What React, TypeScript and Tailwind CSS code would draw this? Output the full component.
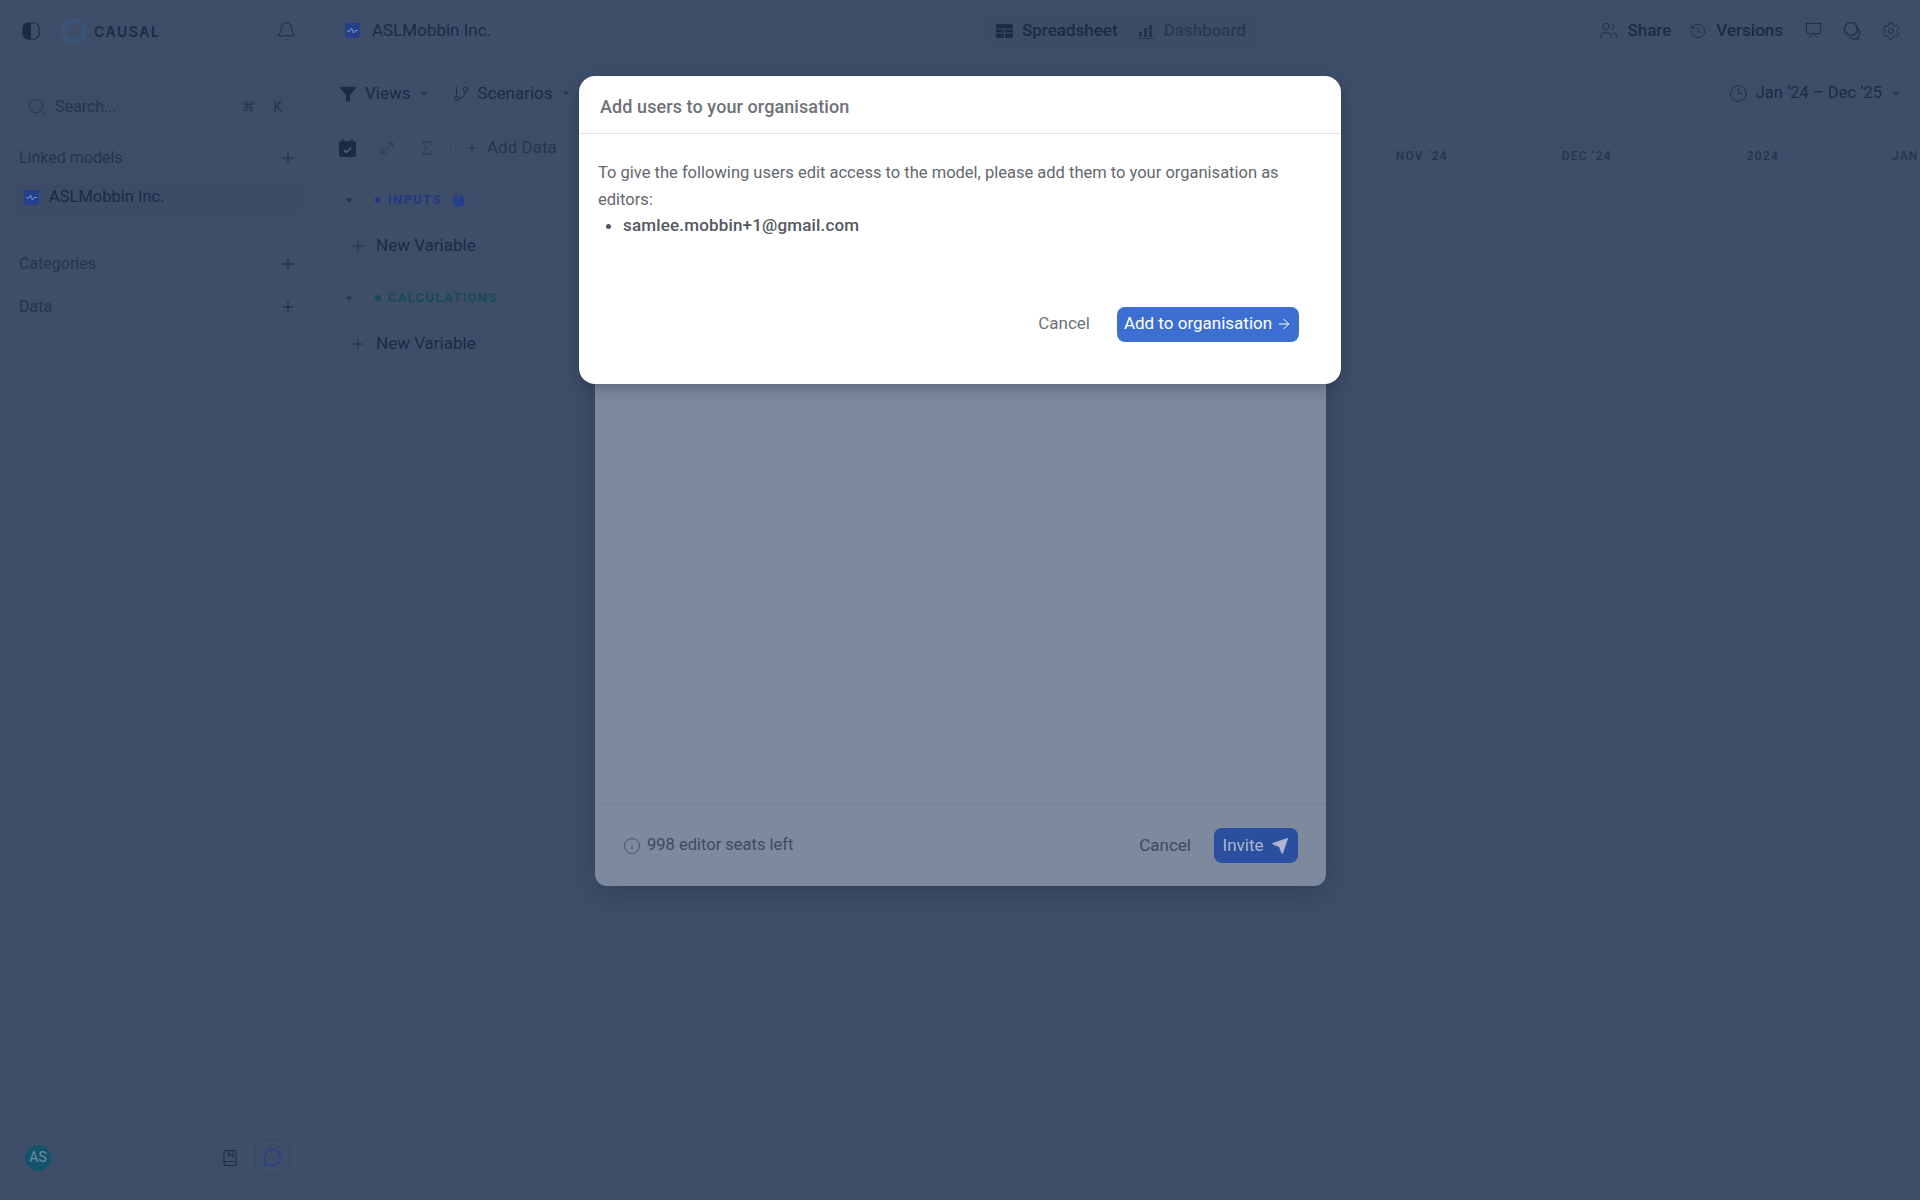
import {
  ArrowRight,
  Bell,
  BookMarked,
  Clock3,
  Filter,
  GitBranch,
  History,
  Info,
  MessageCircleMore,
  MoveDiagonal,
  Plus,
  Presentation,
  Search,
  Send,
  Settings,
  Sigma,
  Users,
} from 'lucide-react';

const Caret = ({ className = 'text-[#1d2a45]/60' }: { className?: string }) => (
  <svg width="8" height="5" viewBox="0 0 8 5" className={className}>
    <path d="M0.5 0.5h7L4 4.5z" fill="currentColor" />
  </svg>
);

const ModelIcon = () => (
  <svg width="15" height="15" viewBox="0 0 15 15">
    <rect width="15" height="15" rx="2" fill="#24408c" />
    <path d="M2 8h3l1.5-3 2 5 1.5-2.500h3" fill="none" stroke="#7d95c8" strokeWidth="1" />
  </svg>
);

const Section = ({ label, top }: { label: string; top: string }) => (
  <div className={`flex h-[22px] items-center justify-between pr-[21px] pl-[19px] text-[16px] text-[#27344e] ${top}`}>
    {label}
    <Plus size={18} strokeWidth={1.25} className="text-[#1d2a45]" />
  </div>
);

const Sidebar = () => (
  <aside className="flex h-full w-[319px] shrink-0 flex-col border-r border-[#3b4b66]">
    <div className="flex h-[62px] items-center pr-[21px] pl-[22px]">
      <svg width="18" height="18" viewBox="0 0 18 18">
        <rect x="1" y="1" width="16" height="16" rx="5" fill="none" stroke="#1d2a45" strokeWidth="1.2" />
        <path d="M6 1h3v16H6a5 5 0 0 1-5-5V6a5 5 0 0 1 5-5z" fill="#1d2a45" />
      </svg>
      <svg width="28" height="28" viewBox="0 0 28 28" className="ml-[20px]">
        <circle cx="14" cy="14" r="10.500" fill="none" stroke="#3a5478" strokeWidth="5" />
      </svg>
      <span className="ml-[6px] font-['Inter',sans-serif] text-[14px] font-semibold tracking-[0.11em] text-[#1d2a45]">CAUSAL</span>
      <Bell size={21} strokeWidth={1.1} className="ml-auto text-[#1d2a45]" />
    </div>
    <div className="mx-[14px] mt-[25px] flex h-[40px] items-center rounded-lg bg-[#3d4d68] pr-[22px] pl-[13px] text-[16px] text-[#27344e]">
      <Search size={20} strokeWidth={1.1} />
      <span className="ml-[8px]">Search...</span>
      <span className="ml-auto text-[13px]">⌘</span>
      <span className="ml-[18px] text-[14px]">K</span>
    </div>
    <Section label="Linked models" top="mt-[20px]" />
    <div className="mx-[14px] mt-[10px] flex h-[37px] items-center gap-[10px] rounded-xl bg-[#3c4c67] pl-[10px] text-[16.5px] text-[#1d2a45]">
      <ModelIcon />
      ASLMobbin Inc.
    </div>
    <Section label="Categories" top="mt-[37px]" />
    <Section label="Data" top="mt-[21px]" />
    <div className="mt-auto mb-[25px] flex items-center pr-[28px] pl-[25px]">
      <div className="flex h-[26px] w-[26px] items-center justify-center rounded-full bg-[#14546a] text-[14px] text-[#6d8fa3]">
        AS
      </div>
      <BookMarked size={18} strokeWidth={1.4} className="ml-auto text-[#1d2a45]" />
      <div className="ml-[16px] flex h-[35px] w-[35px] items-center justify-center rounded-lg border border-[#374763]">
        <MessageCircleMore size={19} strokeWidth={1.6} className="text-[#24408c]" />
      </div>
    </div>
  </aside>
);

const TopBar = () => (
  <div className="relative flex h-[62px] items-center border-b border-[#3c4c67] pr-[19px] pl-[26px] text-[17px] text-[#1d2a45]">
    <ModelIcon />
    <span className="ml-[12px]">ASLMobbin Inc.</span>
    <div className="ml-auto flex items-center font-medium">
      <Users size={19} strokeWidth={1.1} />
      <span className="ml-[9px]">Share</span>
      <History size={18} strokeWidth={1.1} className="ml-[18px]" />
      <span className="ml-[9px]">Versions</span>
      <Presentation size={19} strokeWidth={1.1} className="ml-[21px]" />
      <svg width="19" height="19" viewBox="0 0 19 19" fill="none" stroke="currentColor" strokeWidth="1.100" className="ml-[20px]">
        <circle cx="8" cy="8" r="6.500" />
        <path d="M13 6.500a5.500 5.500 0 0 1 1.500 9.500l1 2H10a5 5 0 0 1-3-2" />
      </svg>
      <Settings size={20} strokeWidth={1.1} className="ml-[19px]" />
    </div>
    <div className="absolute top-[13px] left-[667px] flex h-[36px] items-center rounded-lg bg-[#3c4c67] px-[10px]">
      <svg width="17" height="14" viewBox="0 0 17 14" fill="#1d2a45">
        <path d="M2 0h13a2 2 0 0 1 2 2v2.500H0V2a2 2 0 0 1 2-2zM0 5.500h8v3H0zM9 5.500h8v3H9zM0 9.500h8V14H2a2 2 0 0 1-2-2zM9 9.500h8V12a2 2 0 0 1-2 2H9z" />
      </svg>
      <span className="ml-[9px] font-medium">Spreadsheet</span>
      <svg width="16" height="15" viewBox="0 0 16 15" fill="#27344e" className="ml-[20px]">
        <path d="M0 14h16v1H0zM1 8h3v5H1zM6 4h3v9H6zM11 1h3v12h-3z" />
      </svg>
      <span className="ml-[10px] font-medium text-[#2a3853]">Dashboard</span>
    </div>
  </div>
);

const Toolbars = () => (
  <>
    <div className="flex h-[63px] items-center pr-[20px] pl-[20px] text-[17px] text-[#1d2a45]">
      <Filter size={18} fill="#1d2a45" strokeWidth={1.25} />
      <span className="ml-[8px]">Views</span>
      <Caret className="ml-[9px] text-[#1d2a45]/60" />
      <GitBranch size={18} strokeWidth={1.25} className="ml-[24px]" />
      <span className="ml-[8px]">Scenarios</span>
      <Caret className="ml-[9px] text-[#1d2a45]/60" />
      <Clock3 size={19} strokeWidth={1.1} className="ml-auto" />
      <span className="ml-[8px] text-[16.5px]">Jan ‘24 – Dec ‘25</span>
      <Caret className="ml-[10px] text-[#1d2a45]/60" />
    </div>
    <div className="flex h-[45px] min-w-max items-center pl-[20px] text-[#27344e]">
      <svg width="17" height="18" viewBox="0 0 17 18">
        <path d="M4 0v3M13 0v3" stroke="#1d2a45" strokeWidth="1.5" />
        <rect y="2" width="17" height="16" rx="2" fill="#1d2a45" />
        <path d="M5 11l2.500 2.500L12 8.500" fill="none" stroke="#5c6a83" strokeWidth="1.2" />
      </svg>
      <MoveDiagonal size={18} strokeWidth={1.1} className="ml-[22px]" />
      <Sigma size={18} strokeWidth={1.1} className="ml-[22px]" />
      <div className="ml-[14px] h-[18px] w-px bg-[#38475f]" />
      <Plus size={16} strokeWidth={1.25} className="ml-[13px]" />
      <span className="ml-[7px] text-[17px]">Add Data</span>
      <div className="mt-[16px] ml-[839px] flex items-center text-[12px] font-medium tracking-[0.1em] whitespace-nowrap text-[#27344e]">
        <span>NOV ‘24</span>
        <span className="ml-[114px]">DEC ‘24</span>
        <Sigma size={13} strokeWidth={1} className="ml-[30px] text-[#37465f]" />
        <span className="ml-[92px]">2024</span>
        <span className="ml-[113px]">JAN ‘25</span>
      </div>
    </div>
  </>
);

const GroupRow = ({ label, color, info }: { label: string; color: string; info?: boolean }) => (
  <div className="flex h-[46px] items-center border-y border-[#3c4c67] pl-[26px]">
    <Caret className="text-[#1d2a45]/70" />
    <span className={`ml-[22px] h-[6px] w-[6px] rounded-full ${color}`} />
    <span className={`ml-[7px] text-[13px] font-bold tracking-[0.1em] ${info ? 'text-[#20397f]' : 'text-[#174a58]'}`}>
      {label}
    </span>
    {info && (
      <span className="ml-[10px] flex h-[13px] w-[13px] items-center justify-center rounded-full bg-[#24408c] text-[9px] font-bold text-[#3e4e69]">
        ?
      </span>
    )}
    <div className="mr-[128px] ml-auto h-full w-[168px] bg-[#3d4c67]" />
  </div>
);

const VariableRow = () => (
  <div className="flex h-[46px] items-center border-b border-[#3d4d68] pl-[30px] text-[17px] text-[#1d2a45]">
    <Plus size={18} strokeWidth={1} />
    <span className="ml-[9px]">New Variable</span>
  </div>
);

const Table = () => (
  <div>
    <div className="mt-[7px]">
      <GroupRow label="INPUTS" color="bg-[#20397f]" info />
      <VariableRow />
    </div>
    <div className="mt-[6px]">
      <GroupRow label="CALCULATIONS" color="bg-[#174a58]" />
      <VariableRow />
    </div>
  </div>
);

const InviteModal = () => (
  <div className="absolute top-[100px] left-[595px] flex h-[786px] w-[731px] flex-col justify-end rounded-b-xl bg-[#7d899c] shadow-[0_8px_24px_rgba(20,30,50,0.25)]">
    <div className="flex h-[82px] items-center border-t border-[#74809a] pr-[28px] pl-[28px] text-[16.5px] text-[#3e4a60]">
      <Info size={18} strokeWidth={1.1} />
      <span className="ml-[6px]">998 editor seats left</span>
      <span className="ml-auto text-[17px]">Cancel</span>
      <div className="ml-[23px] flex h-[35px] w-[84px] items-center justify-center gap-[8px] rounded-lg bg-[#2a4f9e] text-[17px] text-[#aab6cf]">
        Invite
        <Send size={18} fill="#aab6cf" strokeWidth={1} />
      </div>
    </div>
  </div>
);

const ConfirmModal = () => (
  <div className="absolute top-[76px] left-[579px] h-[308px] w-[762px] rounded-2xl bg-white text-[#63676e] shadow-[0_4px_16px_rgba(20,30,50,0.3)]">
    <div className="flex h-[58px] items-center border-b border-[#e2e4e8] pt-[3px] pl-[21px] text-[18px] font-medium tracking-[0.005em] text-[#6e7178]">
      Add users to your organisation
    </div>
    <div className="pt-[26px] pr-[40px] pl-[19px] text-[16.5px] leading-[26.5px]">
      <p>To give the following users edit access to the model, please add them to your organisation as editors:</p>
      <ul className="-mt-[1px] list-disc pl-[25px] text-[17px] font-medium tracking-[0.01em] text-[#55585f]">
        <li>samlee.mobbin+1@gmail.com</li>
      </ul>
    </div>
    <div className="mt-[68px] flex items-center justify-end pr-[42px] text-[17px]">
      <span className="text-[#6e7178]">Cancel</span>
      <div className="ml-[27px] flex h-[35px] w-[182px] items-center justify-center gap-[4px] rounded-lg bg-[#3d6fd3] text-white">
        Add to organisation
        <ArrowRight size={16} strokeWidth={1.5} />
      </div>
    </div>
  </div>
);

export default function App() {
  return (
    <div className="relative flex h-[1200px] w-[1920px] overflow-hidden bg-[#3e4e69] font-['Roboto',sans-serif]">
      <Sidebar />
      <main className="min-w-0 flex-1">
        <TopBar />
        <Toolbars />
        <Table />
      </main>
      <InviteModal />
      <ConfirmModal />
    </div>
  );
}
